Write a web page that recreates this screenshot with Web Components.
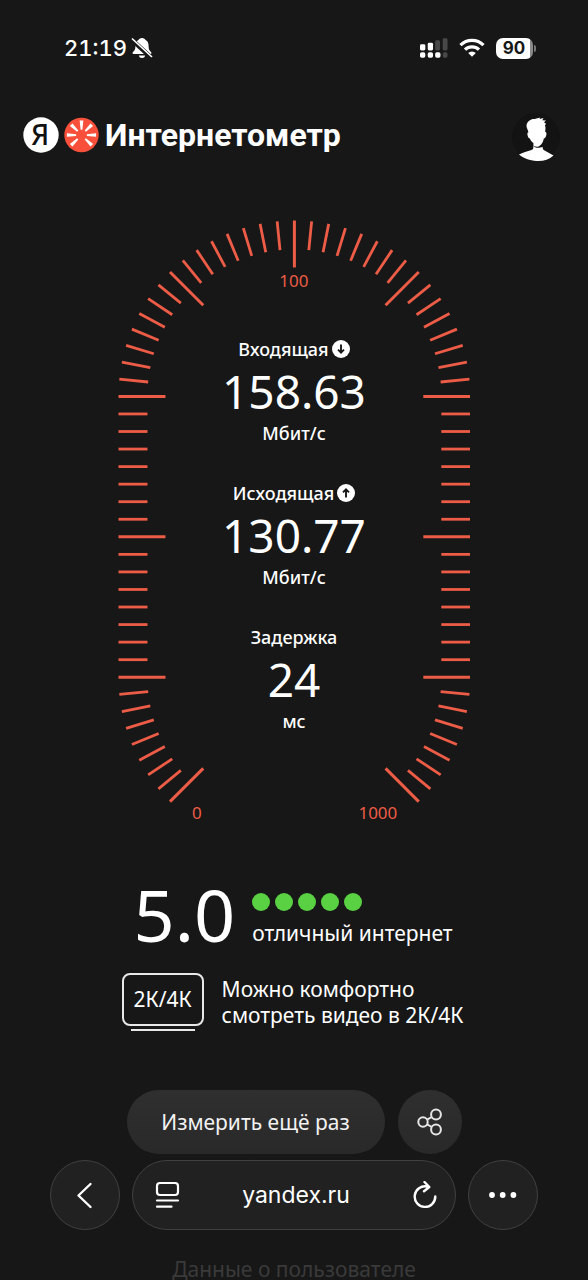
<!DOCTYPE html>
<html lang="ru">
<head>
<meta charset="utf-8">
<meta name="viewport" content="width=device-width, initial-scale=1">
<title>Интернетометр</title>
<style>
  body { margin: 0; background: #171717; color: #fff; font-family: "Noto Sans", "Open Sans", sans-serif; }
</style>
</head>
<body>
<net-app></net-app>

<script>
const define = (name, html, init) => {
  const template = document.createElement("template");
  template.innerHTML = html;
  customElements.define(name, class extends HTMLElement {
    constructor() {
      super();
      this.attachShadow({ mode: "open" }).append(template.content.cloneNode(true));
    }
    connectedCallback() { if (init) init(this, this.shadowRoot); }
  });
};

define("status-bar", `
<style>
  :host { display: flex; align-items: center; justify-content: space-between; height: 96px; padding: 0 52px 0 64px; font-family: Inter, "Liberation Sans", sans-serif; }
  .left { display: flex; align-items: center; gap: 4px; }
  time { font-size: 22px; line-height: 28px; font-weight: 500; font-variant-numeric: tabular-nums; }
  .right { display: flex; align-items: center; gap: 11px; }
  .battery { display: flex; align-items: center; gap: 1px; }
  .level { width: 37px; box-sizing: border-box; border-radius: 7px; background: linear-gradient(90deg, #fff 34px, #8a8a8a 34px); color: #171717; font-size: 17px; line-height: 21px; font-weight: 700; padding-right: 1px; text-align: center; }
  .tip { width: 2px; height: 7px; border-radius: 0 3px 3px 0; background: #777; }
  svg { display: block; }
</style>
<div class="left">
  <time>21:19</time>
  <svg width="22" height="22" viewBox="0 0 22 22" aria-hidden="true">
    <path fill="#fff" d="M11 1C8.900 1 8 2.200 7.500 3 5 4 4.400 6.500 4.400 9.500c0 3-1 4.300-2.400 5.500-.9.900-.5 2 .6 2h16.800c1.100 0 1.500-1.100.6-2-1.400-1.200-2.400-2.500-2.400-5.500 0-3-.6-5.500-3.100-6.500C14 2.200 13.100 1 11 1zM7.800 18.500h6.400c-.4 1.700-1.600 2.500-3.200 2.500s-2.800-.8-3.200-2.500z"/>
    <path d="M.5 2.500L20.500 21" stroke="#171717" stroke-width="4.500"/>
    <path d="M1 1.500L21 20" stroke="#fff" stroke-width="1.700"/>
  </svg>
</div>
<div class="right">
  <svg width="28" height="22" viewBox="0 0 29 22" aria-hidden="true">
    <g fill="#fff"><rect y="7" width="5.500" height="6.500" rx="1.500"/><rect x="8" y="5.500" width="5.500" height="8" rx="1.500"/><rect y="15.500" width="5.500" height="5.500" rx="1.800"/><rect x="8" y="15.500" width="5.500" height="5.500" rx="1.800"/><rect x="15.700" y="15.500" width="5.500" height="5.500" rx="1.800"/></g>
    <g fill="#484848"><rect x="15.700" y="3" width="5" height="10.500" rx="1.500"/><rect x="23.500" y="1" width="5" height="12.500" rx="1.500"/><rect x="23.500" y="15.500" width="5" height="5.500" rx="1.800"/></g>
  </svg>
  <svg width="26" height="20" viewBox="0 0 26 20" fill="none" stroke="#fff" stroke-width="3.200" aria-hidden="true">
    <path d="M1.500 7.200a16.300 16.300 0 0 1 23 0M6 11.700a10 10 0 0 1 14 0"/>
    <path d="M9.200 15a5.400 5.400 0 0 1 7.600 0L13 18.800z" fill="#fff" stroke="none"/>
  </svg>
  <div class="battery"><span class="level">90</span><span class="tip"></span></div>
</div>`);

define("brand-header", `
<style>
  :host { display: flex; align-items: center; height: 78px; padding: 0 27px 0 23px; }
  a { display: flex; align-items: center; gap: 5px; color: inherit; text-decoration: none; }
  h1 { margin: 0; padding-left: 1px; font-family: Roboto, "Noto Sans", sans-serif; font-size: 32px; line-height: 40px; font-weight: 700; }
  button { margin-left: auto; border: 0; padding: 4px 1px 0 0; background: none; cursor: pointer; }
  svg { display: block; overflow: visible; }
</style>
<a href="#">
  <svg width="36" height="36" viewBox="0 0 36 36" aria-hidden="true">
    <circle cx="18" cy="18" r="17.700" fill="#fff"/>
    <text x="17" y="28" text-anchor="middle" font-family="Noto Sans, sans-serif" font-size="28" font-weight="500" fill="#111">Я</text>
  </svg>
  <svg id="sun" width="35" height="36" viewBox="0 0 36 36" aria-hidden="true"><circle cx="18" cy="18" r="17.700" fill="#f8503a"/></svg>
  <h1>Интернетометр</h1>
</a>
<button aria-label="Профиль">
  <svg width="48" height="48" viewBox="0 0 48 48" aria-hidden="true">
    <circle cx="24" cy="24" r="24" fill="#131313"/>
    <path fill="#fff" d="M14.500 12c1-4 4.500-6.500 8.500-6 1.500-.8 3.500-.8 5-1.500l-.3 1.400L31.500 5l-1.200 2.300L34 7.500l-2 1.800 2 1.500-1 1.500.5 2.500-.3 4.200c1.500 0 1.500 2 .9 3.800-.6 1.700-1.200 2.700-2.300 2.700-.6 3.700-2.800 7-5.300 8-1.700.6-3.500.1-5-1 .6 1.500 3.200 2.700 5.500 2.200l3.600-.7c.2 1.800.4 3 2 3.500L41.500 42.500C37 46.500 31 48.500 24.500 48S11 45 7 41.500c3.500-2 8.500-3.200 12.500-4.500 1.500-.5 1.900-1.300 1.900-3.500v-3.500c-1.800-1.400-3-2.500-3.500-4.500-1.100 0-1.700-1-2.200-2.700-.5-1.800-.5-3.600.8-3.600L14.600 14z"/>
  </svg>
</button>`, (host, root) => {
  let d = "";
  for (let k = 0; k < 8; k++) {
    if (k === 4) continue;
    const a = k * 45;
    d += `<path transform="rotate(${a} 18 18)" d="M16.100 3h3.800L18.900 12.500h-1.800z" fill="#fff"/>`;
  }
  root.getElementById("sun").insertAdjacentHTML("beforeend", d);
});

define("speed-gauge", `
<style>
  :host { display: grid; justify-items: center; }
  svg, .readings { grid-area: 1 / 1; }
  svg { width: 60%; min-width: 352px; display: block; }
  .readings { display: grid; align-content: start; gap: 32px; padding-top: 115px; }
</style>
<svg viewBox="0 0 353 606" role="img" aria-label="Шкала скорости">
  <g id="ticks" stroke="#ec5c46"></g>
  <g fill="#ec5c46" font-family="Noto Sans, sans-serif" font-size="17" text-anchor="middle">
    <text x="176" y="67">100</text><text x="79" y="599">0</text><text x="260" y="599">1000</text>
  </g>
</svg>
<div class="readings"><slot></slot></div>`, (host, root) => {
  // The scale is a stadium: a half circle, two straight sides, two eighths of a circle.
  const R = 176, cx = 176.5, top = 176.5, bottom = 457.5;
  let out = "";
  const tick = (x, y, dx, dy, major) => {
    const l = major ? 47 : 29;
    out += `<line x1="${x}" y1="${y}" x2="${x - dx * l}" y2="${y - dy * l}" stroke-width="${major ? 3 : 2.8}"/>`;
  };
  const arc = (cy, from, to) => {
    for (let i = from; i <= to; i++) {
      const a = i * Math.PI / 32, dx = Math.cos(a), dy = Math.sin(a);
      tick(cx + R * dx, cy + R * dy, dx, dy, i % 8 === 0);
    }
  };
  arc(top, -32, 0);
  for (let i = 1; i < 16; i++) {
    const y = top + (bottom - top) * i / 16;
    tick(cx + R, y, 1, 0, i === 8);
    tick(cx - R, y, -1, 0, i === 8);
  }
  arc(bottom, 0, 8);
  arc(bottom, 24, 32);
  root.getElementById("ticks").innerHTML = out;
});

define("speed-reading", `
<style>
  :host { display: grid; justify-items: center; }
  .label { display: flex; align-items: center; gap: 3px; font-size: 18px; line-height: 28px; font-weight: 500; }
  .value { font-size: 46px; line-height: 56px; }
  .unit { font-size: 18px; line-height: 28px; font-weight: 500; }
</style>
<span class="label"><slot name="label"></slot><slot name="icon"></slot></span>
<span class="value"><slot></slot></span>
<span class="unit"><slot name="unit"></slot></span>`);

define("arrow-badge", `
<style>:host { display: block; } :host([up]) svg { transform: rotate(180deg); } svg { display: block; }</style>
<svg width="18" height="18" viewBox="0 0 18 18" aria-hidden="true"><circle cx="9" cy="9" r="9" fill="#fff"/><path d="M9 4.500v8M6 9.700l3 3 3-3" fill="none" stroke="#171717" stroke-width="1.900"/></svg>`);

define("score-summary", `
<style>
  :host { display: grid; justify-content: center; padding-right: 3px; }
  .score { display: flex; align-items: center; gap: 17px; padding-left: 12px; height: 88px; }
  .number { font-size: 72px; line-height: 88px; }
  .rate { display: grid; gap: 9px; padding-top: 12px; }
  .dots { display: flex; gap: 5px; }
  .dots i { width: 18px; height: 18px; border-radius: 50%; background: #59d142; }
  .text { font-size: 21px; line-height: 26px; }
  .video { display: flex; align-items: center; gap: 18px; margin-top: 15px; }
  .screen { display: grid; justify-items: center; gap: 3px; }
  .frame { box-sizing: border-box; width: 82px; height: 53px; border: 2px solid #e8e8e8; border-radius: 8px; font-size: 21px; line-height: 49px; text-align: center; }
  .stand { width: 64px; height: 2px; background: #e8e8e8; }
</style>
<div class="score">
  <span class="number">5.0</span>
  <div class="rate"><div class="dots"><i></i><i></i><i></i><i></i><i></i></div><span class="text">отличный интернет</span></div>
</div>
<div class="video">
  <div class="screen"><div class="frame">2К/4К</div><div class="stand"></div></div>
  <div class="text">Можно комфортно<br>смотреть видео в 2К/4К</div>
</div>`);

define("action-row", `
<style>
  :host { display: flex; justify-content: center; gap: 13px; }
  button { border: 0; padding: 0; height: 64px; border-radius: 32px; background: linear-gradient(#2f2f2f, #292929); color: #f2f2f2; font: inherit; font-size: 21px; line-height: 28px; cursor: pointer; }
  .again { width: 258px; }
  .share { width: 64px; display: grid; place-items: center; }
</style>
<button class="again">Измерить ещё раз</button>
<button class="share" aria-label="Поделиться">
  <svg width="26" height="28" viewBox="0 0 26 28" fill="none" stroke="#e6e6e6" stroke-width="2" aria-hidden="true"><circle cx="6" cy="14" r="4.700"/><circle cx="19" cy="6.500" r="4.900"/><circle cx="19" cy="21.500" r="4.900"/><path d="M10.100 11.700l4.700-2.700M10.100 16.300l4.700 2.700"/></svg>
</button>`);

define("browser-bar", `
<style>
  :host { position: fixed; left: 0; right: 0; bottom: 50px; display: flex; gap: 12px; padding: 0 50px; font-family: Inter, "Liberation Sans", sans-serif; }
  .pill { box-sizing: border-box; height: 70px; border: 1px solid #414141; border-radius: 35px; background: #212121; color: #fff; }
  .round { width: 70px; display: grid; place-items: center; flex: none; padding: 0; cursor: pointer; }
  .address { flex: 1; min-width: 0; display: flex; align-items: center; padding: 0 17px 0 21px; }
  .icon { border: 0; padding: 0; background: none; display: grid; flex: none; cursor: pointer; }
  input { flex: 1; min-width: 0; border: 0; padding: 0; background: none; color: #fff; font: inherit; font-size: 23px; line-height: 28px; text-align: center; outline: 0; }
  svg { display: block; fill: none; stroke: #fff; }
</style>
<button class="pill round" aria-label="Назад"><svg width="18" height="28" viewBox="0 0 18 28" stroke-width="2.400" stroke-linecap="round" stroke-linejoin="round"><path d="M14.500 3L2.500 14.500l12 11.500"/></svg></button>
<div class="pill address">
  <button class="icon" aria-label="Меню страницы"><svg width="26" height="28" viewBox="0 0 26 28" stroke-width="2.200" stroke-linecap="round"><rect x="3" y="2" width="21" height="12" rx="3"/><path d="M3 19.500h21M3 25.700h14.500"/></svg></button>
  <input type="text" value="yandex.ru" aria-label="Адрес" spellcheck="false">
  <button class="icon" aria-label="Обновить"><svg width="26" height="28" viewBox="0 0 26 28" stroke-width="2.400" stroke-linecap="round" stroke-linejoin="round"><path d="M15 5.500A10.300 10.300 0 1 0 23.300 15.500M12.500 1l4.800 5-5.300 4.300"/></svg></button>
</div>
<button class="pill round" aria-label="Ещё"><svg width="30" height="8" viewBox="0 0 30 8"><g fill="#fff" stroke="none"><circle cx="4" cy="4" r="2.900"/><circle cx="14.700" cy="4" r="2.900"/><circle cx="25.400" cy="4" r="2.900"/></g></svg></button>`);

define("net-app", `
<style>
  :host { display: block; height: 100vh; overflow: hidden; }
  main { display: grid; grid-template-columns: minmax(0, 1fr); padding-top: 46px; }
  score-summary { margin-top: 44px; }
  action-row { margin-top: 59px; }
  footer { margin-top: 101px; text-align: center; font-size: 21px; line-height: 28px; color: #3a3a3a; }
</style>
<status-bar></status-bar>
<brand-header></brand-header>
<main>
  <speed-gauge>
    <speed-reading><span slot="label">Входящая</span><arrow-badge slot="icon"></arrow-badge>158.63<span slot="unit">Мбит/с</span></speed-reading>
    <speed-reading><span slot="label">Исходящая</span><arrow-badge slot="icon" up></arrow-badge>130.77<span slot="unit">Мбит/с</span></speed-reading>
    <speed-reading><span slot="label">Задержка</span>24<span slot="unit">мс</span></speed-reading>
  </speed-gauge>
  <score-summary></score-summary>
  <action-row></action-row>
  <footer>Данные о пользователе</footer>
</main>
<browser-bar></browser-bar>`);
</script>
</body>
</html>
